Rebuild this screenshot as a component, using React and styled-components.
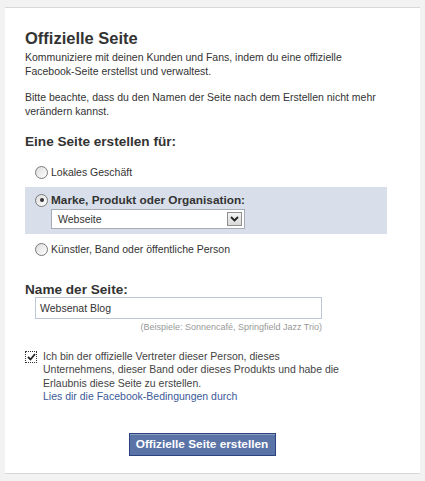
import React from 'react';
import styled, { createGlobalStyle } from 'styled-components';

const GlobalStyle = createGlobalStyle`
  html, body {
    margin: 0;
    padding: 0;
    background: #f2f2f2;
  }
  body {
    font-family: "Liberation Sans", Arial, sans-serif;
    font-size: 10.5px;
    color: #333;
  }
`

const Page = styled.div`
  width: 425px;
  height: 481px;
  padding: 7px 5px 0 5px;
  box-sizing: border-box;
`

const Panel = styled.div`
  background: #fff;
  border-top: 1px solid #d8d8d8;
  border-bottom: 1px solid #d8d8d8;
  height: 467px;
  box-sizing: border-box;
  padding: 20px 33px 0 20px;
`

const Title = styled.h2`
  margin: 0 0 2px 0;
  font-size: 16.5px;
  font-weight: bold;
  color: #333;
  line-height: 20px;
`

const Paragraph = styled.p`
  margin: 0 0 12px 0;
  line-height: 14px;
`

const Heading = styled.h3`
  margin: 16px 0 11px 0;
  font-size: 13.6px;
  font-weight: bold;
  line-height: 16px;
  color: #333;
`

const Option = styled.div`
  display: flex;
  flex-direction: column;
  padding: ${p => (p.active ? '6px 10px 5px 10px' : '4px 10px')};
  background: ${p => (p.active ? '#d8dfea' : 'transparent')};
  margin: ${p => (p.active ? '4px 0' : '0')};
`

const OptionRow = styled.label`
  display: flex;
  align-items: center;
  gap: 3px;
  font-weight: ${p => (p.bold ? 'bold' : 'normal')};
  font-size: ${p => (p.bold ? '11.8px' : '10.5px')};
  line-height: 14px;
`

const Radio = styled.span`
  width: 11px;
  height: 11px;
  border-radius: 50%;
  border: 1px solid #7a7a7a;
  background: linear-gradient(135deg, #dcdcdc, #fff);
  display: inline-flex;
  align-items: center;
  justify-content: center;
  flex: none;

  &::after {
    content: '';
    width: 4px;
    height: 4px;
    border-radius: 50%;
    background: ${p => (p.checked ? '#333' : 'transparent')};
  }
`

const SelectBox = styled.div`
  margin: 2px 0 0 16px;
  width: 194px;
  height: 20px;
  box-sizing: border-box;
  border: 1px solid #a5acb5;
  background: #fff;
  display: flex;
  align-items: center;
  justify-content: space-between;
  padding: 0 2px 0 6px;
`

const SelectArrow = styled.span`
  width: 15px;
  height: 14px;
  box-sizing: border-box;
  border: 1px solid #8e8f8f;
  background: linear-gradient(#f4f4f4, #d9d9d9);
  display: flex;
  align-items: center;
  justify-content: center;
`

const Field = styled.div`
  margin-top: 22px;
`

const FieldLabel = styled.div`
  font-size: 13.6px;
  font-weight: bold;
  line-height: 15px;
  color: #333;
`

const TextInput = styled.div`
  margin: 0 0 0 10px;
  width: 287px;
  height: 22px;
  box-sizing: border-box;
  border: 1px solid #bdc7d8;
  padding: 0 4px;
  display: flex;
  align-items: center;
  color: #333;
`

const Hint = styled.div`
  width: 297px;
  text-align: right;
  font-size: 9px;
  color: #999;
  margin-top: 3px;
  line-height: 11px;
`

const Agreement = styled.div`
  display: flex;
  gap: 6px;
  margin-top: 17px;
  line-height: 13.4px;
`

const CheckBox = styled.span`
  width: 12px;
  height: 12px;
  box-sizing: border-box;
  border: 1px dotted #333;
  margin-top: 1px;
  flex: none;
  display: flex;
  align-items: center;
  justify-content: center;
  background: #fff;
`

const AgreementText = styled.div`
  color: #444;
`

const Link = styled.a`
  color: #3b5998;
  text-decoration: none;
`

const Actions = styled.div`
  display: flex;
  justify-content: center;
  margin-top: 29px;
  padding-right: 8px;
`

const Button = styled.button`
  font-family: "Liberation Sans", Arial, sans-serif;
  font-size: 11.8px;
  font-weight: bold;
  color: #fff;
  background: #5b74a8;
  border: 1px solid #29447e;
  box-shadow: inset 0 1px 0 #8a9cc2;
  padding: 0;
  height: 23px;
  width: 147px;
`

export default function App() {
  return (
    <>
      <GlobalStyle />
      <Page>
        <Panel>
          <Title>Offizielle Seite</Title>
          <Paragraph>
            Kommuniziere mit deinen Kunden und Fans, indem du eine offizielle
            <br />
            Facebook-Seite erstellst und verwaltest.
          </Paragraph>
          <Paragraph>
            Bitte beachte, dass du den Namen der Seite nach dem Erstellen nicht mehr
            <br />
            verändern kannst.
          </Paragraph>

          <Heading>Eine Seite erstellen für:</Heading>
          <Option>
            <OptionRow>
              <Radio />
              Lokales Geschäft
            </OptionRow>
          </Option>
          <Option active>
            <OptionRow bold>
              <Radio checked />
              Marke, Produkt oder Organisation:
            </OptionRow>
            <SelectBox>
              <span>Webseite</span>
              <SelectArrow>
                <svg width="9" height="6" viewBox="0 0 9 6">
                  <path d="M1 1 L4.5 4.5 L8 1" fill="none" stroke="#222" strokeWidth="1.8" />
                </svg>
              </SelectArrow>
            </SelectBox>
          </Option>
          <Option>
            <OptionRow>
              <Radio />
              Künstler, Band oder öffentliche Person
            </OptionRow>
          </Option>

          <Field>
            <FieldLabel>Name der Seite:</FieldLabel>
            <TextInput>Websenat Blog</TextInput>
            <Hint>(Beispiele: Sonnencafé, Springfield Jazz Trio)</Hint>
          </Field>

          <Agreement>
            <CheckBox>
              <svg width="9" height="8" viewBox="0 0 9 8">
                <path d="M1 4 L3.5 6.5 L8 1" fill="none" stroke="#222" strokeWidth="1.8" />
              </svg>
            </CheckBox>
            <AgreementText>
              Ich bin der offizielle Vertreter dieser Person, dieses
              <br />
              Unternehmens, dieser Band oder dieses Produkts und habe die
              <br />
              Erlaubnis diese Seite zu erstellen.
              <br />
              <Link href="#">Lies dir die Facebook-Bedingungen durch</Link>
            </AgreementText>
          </Agreement>

          <Actions>
            <Button>Offizielle Seite erstellen</Button>
          </Actions>
        </Panel>
      </Page>
    </>
  );
}
